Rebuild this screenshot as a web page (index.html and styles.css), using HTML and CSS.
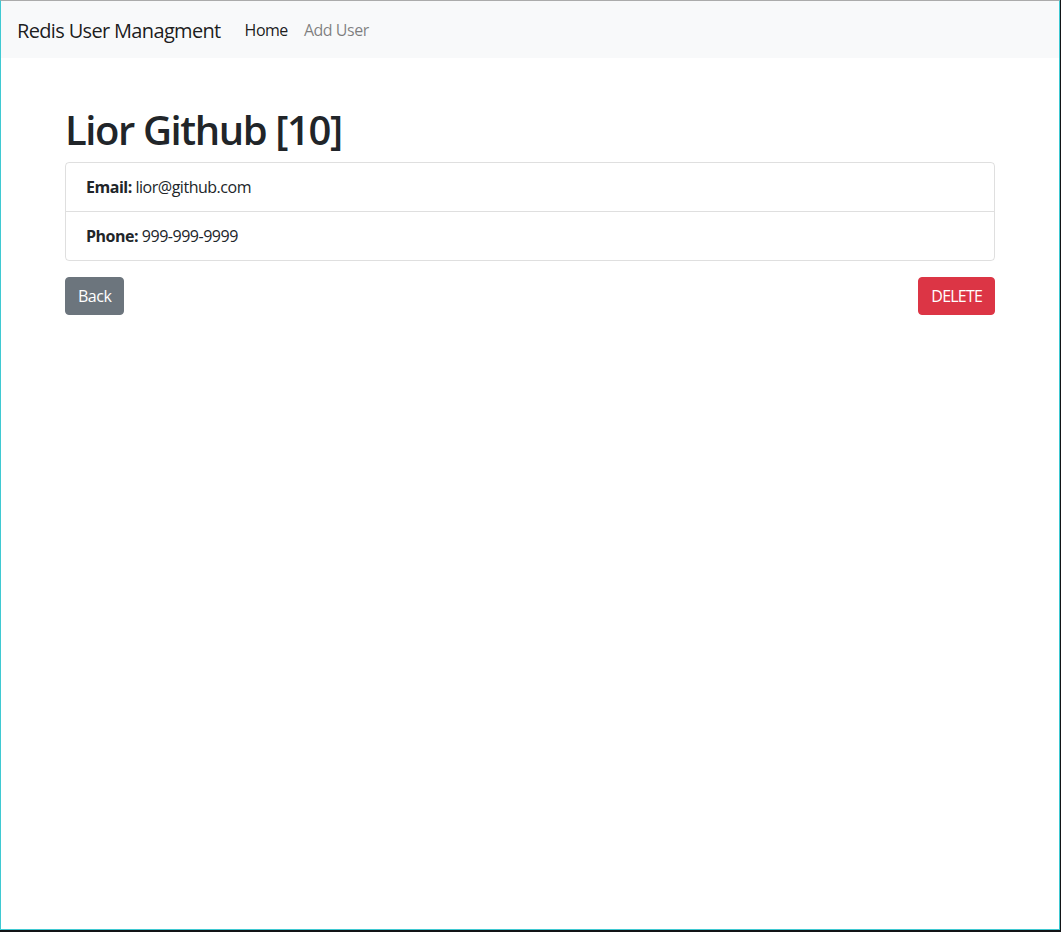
FILE: index.html
```html
<!DOCTYPE html>
<html lang="en">
<head>
<meta charset="utf-8">
<title>Redis User Managment</title>
<link rel="stylesheet" href="styles.css">
</head>
<body>
<div class="frame">
  <nav class="navbar">
    <a class="brand" href="#">Redis User Managment</a>
    <ul class="nav">
      <li><a class="nav-link active" href="#">Home</a></li>
      <li><a class="nav-link" href="#">Add User</a></li>
    </ul>
  </nav>
  <main class="container">
    <h1 class="title">Lior Github [10]</h1>
    <ul class="list-group">
      <li class="list-item"><strong>Email:</strong> lior@github.com</li>
      <li class="list-item"><strong>Phone:</strong> 999-999-9999</li>
    </ul>
    <div class="actions">
      <a class="btn btn-secondary" href="#">Back</a>
      <button class="btn btn-danger" type="button">DELETE</button>
    </div>
  </main>
</div>
</body>
</html>
```
FILE: styles.css
```css
html {
  margin: 0;
  padding: 0;
  background: #121416;
}
body {
  margin: 0;
  padding: 0;
  font-family: "Open Sans", "Noto Sans", sans-serif;
  font-size: 16px;
  line-height: 1.5;
  letter-spacing: -0.03em;
  color: #212529;
}
.frame {
  box-sizing: border-box;
  width: 1060px;
  height: 930px;
  background: #fff;
  border-left: 1px solid #3fc9d2;
  border-right: 1px solid #3fc9d2;
  border-bottom: 1px solid #3fc9d2;
  border-top: 1px solid #ababab;
}
.navbar {
  display: flex;
  align-items: center;
  padding: 8px 16px;
  background: #f8f9fa;
  height: 57px;
  box-sizing: border-box;
}
.brand {
  font-size: 20px;
  line-height: 30px;
  padding: 6px 0 4px;
  margin-right: 16px;
  letter-spacing: -0.033em;
  color: rgba(0, 0, 0, 0.9);
  text-decoration: none;
  white-space: nowrap;
}
.nav {
  display: flex;
  list-style: none;
  margin: 0;
  padding: 0;
}
.nav-link {
  display: block;
  padding: 8px 8px;
  color: rgba(0, 0, 0, 0.5);
  text-decoration: none;
}
.nav-link.active {
  color: rgba(0, 0, 0, 0.9);
}
.container {
  width: 960px;
  box-sizing: border-box;
  padding: 0 15px;
  margin: 48px auto 0;
}
.title {
  margin: 0 0 8px;
  font-size: 40px;
  font-weight: 600;
  line-height: 1.2;
  letter-spacing: -0.035em;
}
.list-group {
  list-style: none;
  margin: 0;
  padding: 0;
  border: 1px solid rgba(0, 0, 0, 0.125);
  border-radius: 4px;
}
.list-item {
  padding: 12px 20px;
}
.list-item + .list-item {
  border-top: 1px solid rgba(0, 0, 0, 0.125);
}
.list-item strong {
  font-weight: 700;
}
.actions {
  display: flex;
  justify-content: space-between;
  margin-top: 16px;
}
.btn {
  display: inline-block;
  font-family: inherit;
  font-size: 16px;
  line-height: 24px;
  letter-spacing: -0.03em;
  padding: 6px 12px;
  border: 1px solid transparent;
  border-radius: 4px;
  color: #fff;
  text-decoration: none;
  cursor: pointer;
}
.btn-secondary {
  background: #6c757d;
  border-color: #6c757d;
}
.btn-danger {
  background: #dc3545;
  border-color: #dc3545;
  letter-spacing: -0.05em;
}
```
